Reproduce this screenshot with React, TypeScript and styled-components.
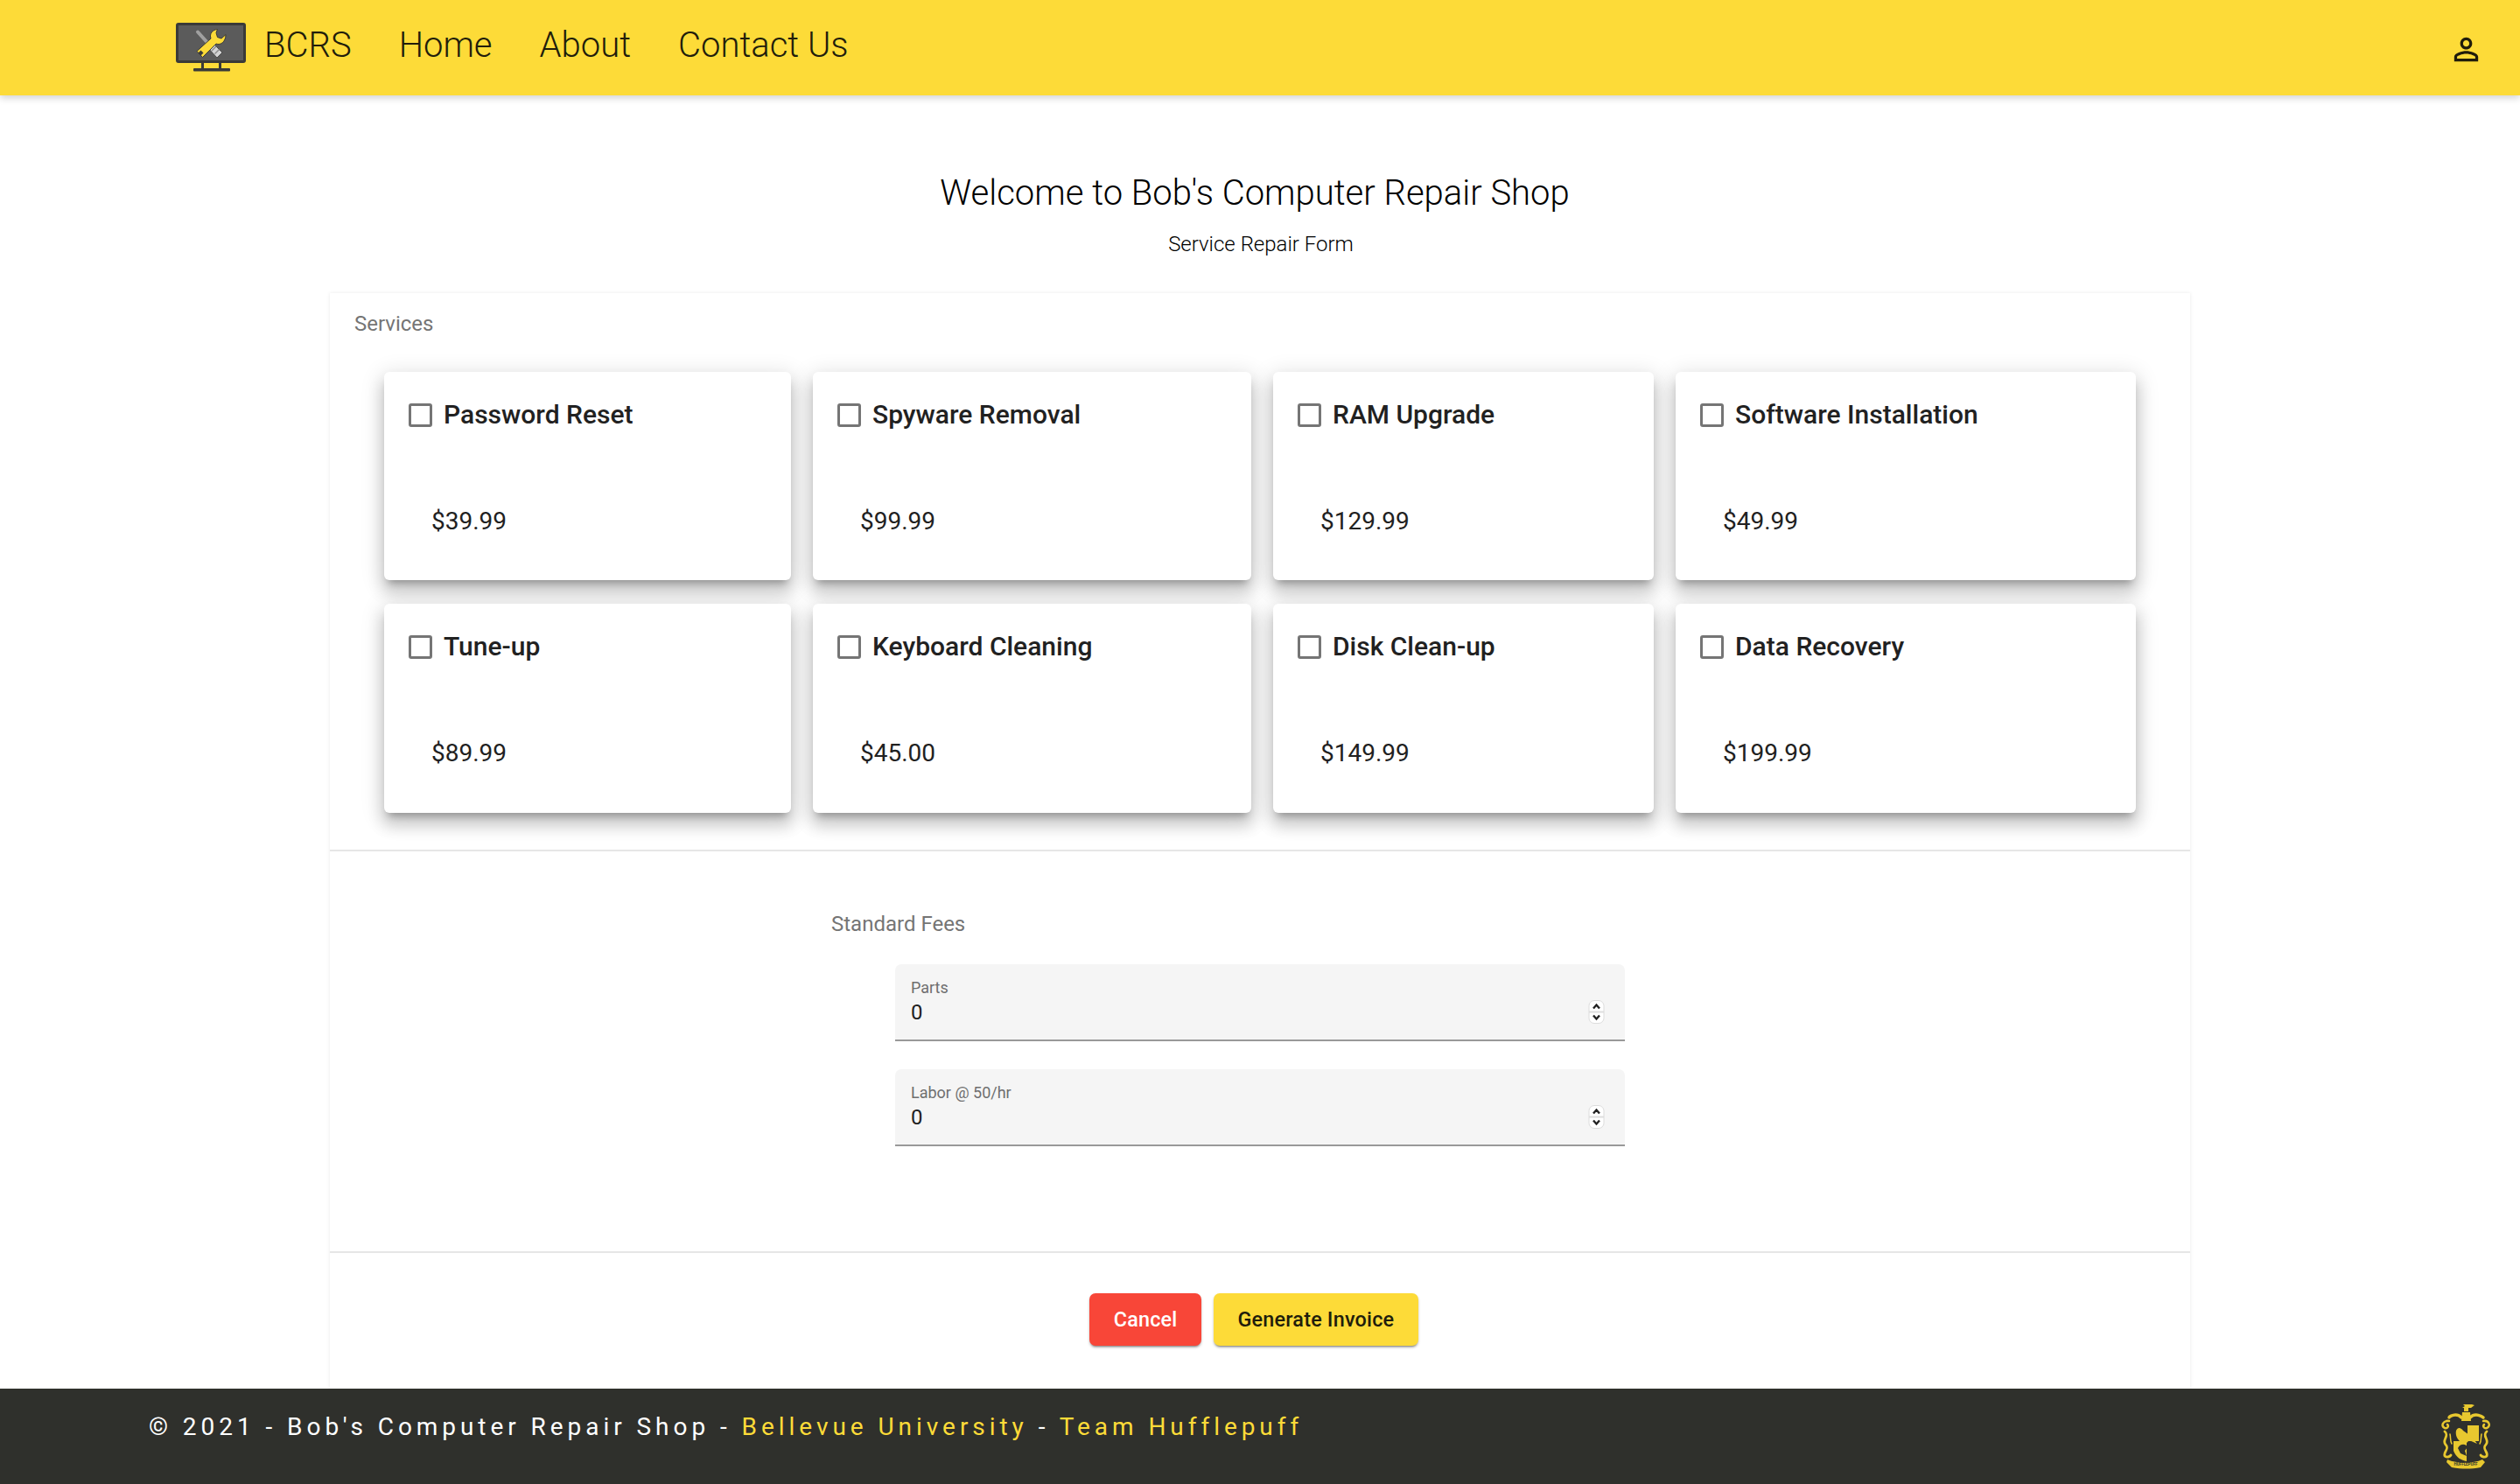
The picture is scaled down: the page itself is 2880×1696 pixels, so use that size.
import styled, { createGlobalStyle } from 'styled-components';

const GlobalStyle = createGlobalStyle`
  html, body {
    margin: 0;
    padding: 0;
    background: #fff;
    font-family: Roboto, "Liberation Sans", sans-serif;
  }
`;

const Page = styled.div`
  width: 2880px;
  height: 1696px;
  display: flex;
  flex-direction: column;
  overflow: hidden;
`;

const Toolbar = styled.header`
  position: relative;
  z-index: 2;
  flex: 0 0 109px;
  display: flex;
  align-items: center;
  box-sizing: border-box;
  padding: 0 41px 0 201px;
  background: #fddb38;
  color: #211d0b;
  box-shadow: 0 3px 8px rgba(0, 0, 0, 0.18);
`;

const LogoMark = styled.svg`
  flex: none;
  width: 80px;
  height: 56px;
  margin-bottom: 2px;
`;

const Brand = styled.span`
  margin: 0 0 6px 21px;
  font-size: 40px;
  font-weight: 300;
`;

const NavLink = styled.a`
  margin: 0 0 6px 54px;
  font-size: 40px;
  font-weight: 300;
`;

const UserIcon = styled.svg`
  width: 41px;
  height: 41px;
  margin: 4px 0 0 auto;
  fill: #211d0b;
`;

const Main = styled.main`
  flex: 1;
  display: flex;
  flex-direction: column;
  align-items: center;
  min-height: 0;
`;

const Title = styled.h1`
  margin: 88px 12px 0 0;
  font-size: 40px;
  line-height: 48px;
  font-weight: 300;
  color: #000;
`;

const Subtitle = styled.p`
  margin: 18px 0 0 2px;
  font-size: 24px;
  line-height: 32px;
  font-weight: 300;
  color: #000;
`;

const Panel = styled.section`
  flex: 1;
  width: 2126px;
  margin-top: 40px;
  box-shadow: 0 0 4px rgba(0, 0, 0, 0.09);
  display: flex;
  flex-direction: column;
`;

const Services = styled.div`
  flex: 0 0 638px;
  padding: 19px 28px 0;
  box-sizing: border-box;
  border-bottom: 2px solid #e6e6e6;
`;

const SectionLabel = styled.div`
  font-size: 24px;
  line-height: 32px;
  font-weight: 400;
  color: #757575;
`;

const CardGrid = styled.div`
  display: grid;
  grid-template-columns: 465px 501px 435px 526px;
  grid-template-rows: 238px 239px;
  gap: 27px 25px;
  margin: 39px 0 0 34px;
`;

const Card = styled.div`
  display: flex;
  flex-direction: column;
  padding: 28px 27.5px 0;
  box-sizing: border-box;
  background: #fff;
  border-radius: 6px;
  box-shadow: 0 8px 9px -5px rgba(0, 0, 0, 0.28), 0 14px 17px 2px rgba(0, 0, 0, 0.14), 0 5px 24px 4px rgba(0, 0, 0, 0.12);
`;

const CardHead = styled.label`
  display: flex;
  align-items: center;
  font-size: 30px;
  line-height: 42px;
  font-weight: 500;
  color: #212121;
`;

const Check = styled.span`
  flex: 0 0 27px;
  height: 27px;
  margin-right: 13.5px;
  box-sizing: border-box;
  border: 3px solid #757575;
  border-radius: 3px;
`;

const Price = styled.div`
  margin: 81px 0 0 26.5px;
  font-size: 28px;
  line-height: 40px;
  font-weight: 400;
  color: #212121;
`;

const Fees = styled.div`
  flex: 0 0 459px;
  padding: 67px 0 0 573px;
  box-sizing: border-box;
  border-bottom: 2px solid #e6e6e6;
`;

const FieldStack = styled.div`
  display: flex;
  flex-direction: column;
  gap: 32px;
  width: 834px;
  margin: 30px 0 0 73px;
`;

const Field = styled.div`
  position: relative;
  height: 88px;
  padding: 15px 18px 0;
  box-sizing: border-box;
  background: #f5f5f5;
  border-bottom: 2px solid #999;
  border-radius: 7px 7px 0 0;
`;

const FieldLabel = styled.div`
  font-size: 18px;
  line-height: 24px;
  color: #6f6f6f;
`;

const FieldValue = styled.div`
  font-size: 24px;
  line-height: 32px;
  color: #212121;
`;

const Spinner = styled.svg`
  position: absolute;
  right: 23px;
  top: 41px;
  width: 19px;
  height: 27px;
`;

const Actions = styled.div`
  display: flex;
  justify-content: center;
  gap: 14px;
  padding: 46px 14px 0 0;
`;

const ActionButton = styled.button<{ $tone: 'danger' | 'primary' }>`
  height: 60px;
  padding: 0 27.5px;
  border: 0;
  border-radius: 7px;
  font-family: inherit;
  font-size: 23.4px;
  letter-spacing: 0.2px;
  font-weight: 500;
  background: ${({ $tone }) => ($tone === 'danger' ? '#f84638' : '#fddb38')};
  color: ${({ $tone }) => ($tone === 'danger' ? '#fff' : '#211d0b')};
  box-shadow: 0 3px 2px -2px rgba(0, 0, 0, 0.3), 0 2px 3px rgba(0, 0, 0, 0.25);
`;

const Footer = styled.footer`
  position: relative;
  flex: 0 0 109px;
  padding: 24px 0 0 170px;
  box-sizing: border-box;
  background: #2f302c;
  font-size: 28px;
  line-height: 40px;
  font-weight: 400;
  letter-spacing: 4.95px;
  color: #fff;
`;

const Accent = styled.span`
  color: #fddb38;
`;

const Crest = styled.svg`
  position: absolute;
  top: 16px;
  right: 32px;
  width: 60px;
  height: 75px;
  letter-spacing: 0;
  overflow: visible;
`;

const services = [
  { name: 'Password Reset', price: '$39.99' },
  { name: 'Spyware Removal', price: '$99.99' },
  { name: 'RAM Upgrade', price: '$129.99' },
  { name: 'Software Installation', price: '$49.99' },
  { name: 'Tune-up', price: '$89.99' },
  { name: 'Keyboard Cleaning', price: '$45.00' },
  { name: 'Disk Clean-up', price: '$149.99' },
  { name: 'Data Recovery', price: '$199.99' },
];

function Logo() {
  return (
    <LogoMark viewBox="0 0 80 56">
      <rect x="1.5" y="1.5" width="77" height="43" rx="1.5" fill="#5b5b5b" stroke="#3a3a38" strokeWidth="3" />
      <path d="M29 45h3v8h-3zM49 45h3v8h-3z" fill="#3a3a38" />
      <rect x="20" y="52" width="42" height="3.5" rx="1" fill="#3a3a38" />
      <path d="M25 10.5L39 26" stroke="#a0a0a0" strokeWidth="4" strokeLinecap="round" />
      <path d="M37 29l6-5 10 10-6 6z" fill="#d4d4d4" stroke="#3a3a38" strokeWidth="0.8" />
      <path d="M41 32l5-5M44.5 35.5l5-5" stroke="#8a8a8a" strokeWidth="1.4" />
      <path
        d="M47.5 7.5C42 8 38 12.500 40 18L24 32.500 30.500 39.500 46 24C51 26 57 22 57 13.500L52 18 47.500 16.500 46 11.500z"
        fill="#fddb38"
        stroke="#3a3a38"
        strokeWidth="1"
      />
      <path d="M28.500 31.500l3 3-3 3-3-3z" fill="#3a3a38" />
    </LogoMark>
  );
}

function HufflepuffCrest() {
  return (
    <Crest viewBox="0 0 60 75">
      <g fill="#e8c82f">
        <path d="M27 2h10l3 1-4 3h-3v4h-5V6h-2l3-2z" />
        <path d="M26 11h9l1 10h-11z" />
        <path d="M32 26h13v18H32z" />
        <path d="M16 44h15v23c-6-1-12-4-15-12z" />
        <path d="M9 65c11 5 29 5 40 0l3 3-5 6c-11 2-21 2-33 0l-6-6z" />
      </g>
      <g fill="none" stroke="#e8c82f" strokeLinecap="round">
        <path d="M25 17C19 11 11 16 11 17" strokeWidth="3.500" />
        <path d="M35 17C41 11 49 16 50 17" strokeWidth="3.500" />
        <path d="M11 21C4 20 1 27 6 29c3 1 5-2 3-4" strokeWidth="2.500" />
        <path d="M50 21C57 20 59 27 54 29c-3 1-5-2-3-4" strokeWidth="2.500" />
        <path d="M6 33c6 5-4 10 1 15s-3 8-1 13c2 2 6 1 7-1" strokeWidth="2.800" />
        <path d="M54 33c-6 5 4 10-1 15s3 8 1 13c-2 2-6 1-7-1" strokeWidth="2.800" />
        <path d="M12 36c1 4 0 8 2 11M48 36c-1 4 0 8-2 11" strokeWidth="1.500" />
      </g>
      <path d="M19 32c2-5 6-3 8 0l10 7 6 8-9-4-4 4-7-3c-3-3-5-7-4-12z" fill="#e8c82f" />
      <path d="M21 52c2-5 9-6 11-1l-3 4 2 6-7-3z" fill="#2f302c" />
      <text x="30" y="71.5" textAnchor="middle" fontSize="4.500" fontWeight="700" fill="#2f302c">
        HUFFLEPUFF
      </text>
    </Crest>
  );
}

export default function App() {
  return (
    <Page>
      <GlobalStyle />
      <Toolbar>
        <Logo />
        <Brand>BCRS</Brand>
        <NavLink>Home</NavLink>
        <NavLink>About</NavLink>
        <NavLink>Contact Us</NavLink>
        <UserIcon viewBox="0 0 24 24">
          <path d="M12 5.9c1.16 0 2.1.94 2.1 2.1s-.94 2.1-2.1 2.1S9.9 9.16 9.9 8s.94-2.1 2.1-2.1m0 9c2.97 0 6.1 1.46 6.1 2.1v1.1H5.9V17c0-.64 3.13-2.1 6.1-2.1M12 4C9.79 4 8 5.79 8 8s1.79 4 4 4 4-1.79 4-4-1.79-4-4-4zm0 9c-2.67 0-8 1.34-8 4v3h16v-3c0-2.66-5.33-4-8-4z" />
        </UserIcon>
      </Toolbar>
      <Main>
        <Title>Welcome to Bob's Computer Repair Shop</Title>
        <Subtitle>Service Repair Form</Subtitle>
        <Panel>
          <Services>
            <SectionLabel>Services</SectionLabel>
            <CardGrid>
              {services.map((service) => (
                <Card key={service.name}>
                  <CardHead>
                    <Check />
                    {service.name}
                  </CardHead>
                  <Price>{service.price}</Price>
                </Card>
              ))}
            </CardGrid>
          </Services>
          <Fees>
            <SectionLabel>Standard Fees</SectionLabel>
            <FieldStack>
              {['Parts', 'Labor @ 50/hr'].map((label) => (
                <Field key={label}>
                  <FieldLabel>{label}</FieldLabel>
                  <FieldValue>0</FieldValue>
                  <Spinner viewBox="0 0 19 27">
                    <rect x="1" y="0.5" width="17" height="26" rx="6" fill="#fff" stroke="#dcdcdc" />
                    <rect x="1" y="12.500" width="17" height="2" fill="#dedede" />
                    <path d="M6 9.500l3.500-4 3.500 4M6 17.500l3.500 4 3.500-4" fill="none" stroke="#222" strokeWidth="2.400" />
                  </Spinner>
                </Field>
              ))}
            </FieldStack>
          </Fees>
          <Actions>
            <ActionButton $tone="danger">Cancel</ActionButton>
            <ActionButton $tone="primary">Generate Invoice</ActionButton>
          </Actions>
        </Panel>
      </Main>
      <Footer>
        © 2021 - Bob's Computer Repair Shop - <Accent>Bellevue University</Accent> - <Accent>Team Hufflepuff</Accent>
        <HufflepuffCrest />
      </Footer>
    </Page>
  );
}
